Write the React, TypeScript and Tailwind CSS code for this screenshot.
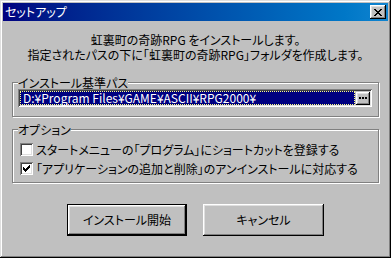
import React from "react"

const raised =
  "shadow-[inset_-1px_-1px_#000,inset_1px_1px_#fff,inset_-2px_-2px_#808080,inset_2px_2px_#dfdfdf]"

function CloseIcon() {
  const rows = [
    [0, 1, 6, 7],
    [1, 2, 5, 6],
    [2, 3, 4, 5],
    [3, 4],
    [2, 3, 4, 5],
    [1, 2, 5, 6],
    [0, 1, 6, 7],
  ]
  return (
    <svg width="8" height="7" viewBox="0 0 8 7" shapeRendering="crispEdges">
      {rows.map((cols, y) =>
        cols.map((x) => <rect key={`${x}-${y}`} x={x} y={y} width="1" height="1" fill="#000" />)
      )}
    </svg>
  )
}

function CheckIcon() {
  const rows = [[6], [5, 6], [0, 4, 5, 6], [0, 1, 3, 4, 5], [0, 1, 2, 3, 4], [1, 2, 3], [2]]
  return (
    <svg width="7" height="7" viewBox="0 0 7 7" shapeRendering="crispEdges">
      {rows.map((cols, y) =>
        cols.map((x) => <rect key={`${x}-${y}`} x={x} y={y} width="1" height="1" fill="#000" />)
      )}
    </svg>
  )
}

function Checkbox({ checked, label }: { checked?: boolean; label: string }) {
  return (
    <div className="flex items-center h-[19px] pl-[2px]">
      <div className="w-[13px] h-[13px] bg-white flex items-center justify-center shadow-[inset_1px_1px_#808080,inset_-1px_-1px_#fff,inset_2px_2px_#404040,inset_-2px_-2px_#dfdfdf]">
        {checked && <CheckIcon />}
      </div>
      <span className="ml-[3px]">{label}</span>
    </div>
  )
}

export default function App() {
  return (
    <div className="w-[391px] h-[258px] bg-[#c0c0c0] p-[3px] flex flex-col text-[12px] text-black font-['Noto_Sans_CJK_JP',sans-serif] [font-feature-settings:'palt'] shadow-[inset_-1px_-1px_#000,inset_1px_1px_#dfdfdf,inset_-2px_-2px_#808080,inset_2px_2px_#fff]">
      {/* Title bar */}
      <div className="h-[18px] flex items-center justify-between bg-linear-to-r from-[#000080] to-[#1084d0] pl-[2px] pr-[2px]">
        <span className="text-white leading-[18px]">セットアップ</span>
        <div className={`w-[16px] h-[14px] bg-[#c0c0c0] flex items-center justify-center ${raised}`}>
          <CloseIcon />
        </div>
      </div>

      <div className="flex flex-col px-[9px]">
        {/* Message */}
        <div className="mt-[11px] text-center leading-[15px]">
          <p>虹裏町の奇跡RPG をインストールします。</p>
          <p>指定されたパスの下に「虹裏町の奇跡RPG」フォルダを作成します。</p>
        </div>

        {/* Install path */}
        <fieldset className="mt-[14px] border border-[#808080] shadow-[inset_1px_1px_#fff,1px_1px_#fff] pl-[5px] pr-[6px] pb-[9px]">
          <legend className="leading-[13px] bg-[#c0c0c0]">インストール基準パス</legend>
          <div className="h-[18px] flex items-center p-[2px] bg-[#c0c0c0] shadow-[inset_1px_1px_#808080,inset_-1px_-1px_#fff,inset_2px_2px_#404040,inset_-2px_-2px_#dfdfdf]">
            <div className="flex-1 h-full bg-[#000080] border border-dotted border-[#ffff80] text-white leading-[12px] pl-[2px] flex items-center">
              D:¥Program Files¥GAME¥ASCII¥RPG2000¥
            </div>
            <div className={`w-[14px] h-[13px] ml-[1px] bg-[#c0c0c0] flex items-center justify-center gap-[1px] ${raised}`}>
              <span className="w-[2px] h-[2px] bg-black" />
              <span className="w-[2px] h-[2px] bg-black" />
              <span className="w-[2px] h-[2px] bg-black" />
            </div>
          </div>
        </fieldset>

        {/* Options */}
        <fieldset className="mt-[6px] border border-[#808080] shadow-[inset_1px_1px_#fff,1px_1px_#fff] pl-[5px] pr-[6px] pt-[4px] pb-[4px]">
          <legend className="leading-[13px] bg-[#c0c0c0]">オプション</legend>
          <Checkbox label="スタートメニューの「プログラム」にショートカットを登録する" />
          <Checkbox checked label="「アプリケーションの追加と削除」のアンインストールに対応する" />
        </fieldset>

        {/* Buttons */}
        <div className="mt-[21px] flex justify-center gap-[16px]">
          <div className="w-[120px] h-[32px] border border-black">
            <div className={`w-full h-full flex items-center justify-center ${raised}`}>インストール開始</div>
          </div>
          <div className={`w-[121px] h-[32px] flex items-center justify-center ${raised}`}>キャンセル</div>
        </div>
      </div>
    </div>
  )
}
